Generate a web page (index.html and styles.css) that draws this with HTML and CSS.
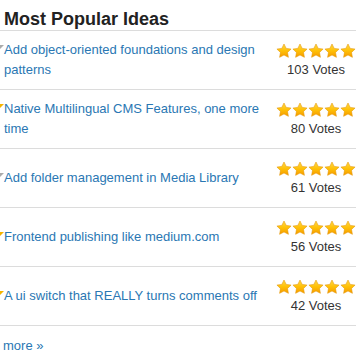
FILE: index.html
```html
<!DOCTYPE html>
<html lang="en">
<head>
  <meta charset="UTF-8" />
  <meta name="viewport" content="width=device-width, initial-scale=1.0" />
  <title>Most Popular Ideas</title>
  <link rel="stylesheet" href="styles.css">
</head>
<body>
  <svg class="defs" width="0" height="0" aria-hidden="true">
    <defs>
      <linearGradient id="gold" x1="0" y1="0" x2="0" y2="1">
        <stop offset="0" stop-color="#ffd84a" />
        <stop offset="0.5" stop-color="#ffc107" />
        <stop offset="1" stop-color="#f59a00" />
      </linearGradient>
      <symbol id="star" viewBox="0 0 24 24">
        <polygon points="12,1.5 15.3,8.1 22.6,9.1 17.3,14.2 18.6,21.5 12,18 5.4,21.5 6.7,14.2 1.4,9.1 8.7,8.1" fill="url(#gold)" stroke="#e39400" stroke-width="0.8" stroke-linejoin="round" />
      </symbol>
    </defs>
  </svg>

  <div class="widget">
    <h2 class="title">Most Popular Ideas</h2>
    <ul class="ideas">
      <li class="idea">
        <div class="idea-text"><span class="status grey"></span><a href="#">Add object-oriented foundations and design patterns</a></div>
        <div class="rating">
          <svg class="stars" width="80" height="16"><use href="#star" x="0" width="16" height="16"/><use href="#star" x="16" width="16" height="16"/><use href="#star" x="32" width="16" height="16"/><use href="#star" x="48" width="16" height="16"/><use href="#star" x="64" width="16" height="16"/></svg>
          <div class="votes">103 Votes</div>
        </div>
      </li>
      <li class="idea">
        <div class="idea-text"><span class="status gold"></span><a href="#">Native Multilingual CMS Features, one more time</a></div>
        <div class="rating">
          <svg class="stars" width="80" height="16"><use href="#star" x="0" width="16" height="16"/><use href="#star" x="16" width="16" height="16"/><use href="#star" x="32" width="16" height="16"/><use href="#star" x="48" width="16" height="16"/><use href="#star" x="64" width="16" height="16"/></svg>
          <div class="votes">80 Votes</div>
        </div>
      </li>
      <li class="idea">
        <div class="idea-text"><span class="status grey"></span><a href="#">Add folder management in Media Library</a></div>
        <div class="rating">
          <svg class="stars" width="80" height="16"><use href="#star" x="0" width="16" height="16"/><use href="#star" x="16" width="16" height="16"/><use href="#star" x="32" width="16" height="16"/><use href="#star" x="48" width="16" height="16"/><use href="#star" x="64" width="16" height="16"/></svg>
          <div class="votes">61 Votes</div>
        </div>
      </li>
      <li class="idea">
        <div class="idea-text"><span class="status gold"></span><a href="#">Frontend publishing like medium.com</a></div>
        <div class="rating">
          <svg class="stars" width="80" height="16"><use href="#star" x="0" width="16" height="16"/><use href="#star" x="16" width="16" height="16"/><use href="#star" x="32" width="16" height="16"/><use href="#star" x="48" width="16" height="16"/><use href="#star" x="64" width="16" height="16"/></svg>
          <div class="votes">56 Votes</div>
        </div>
      </li>
      <li class="idea">
        <div class="idea-text"><span class="status gold"></span><a href="#">A ui switch that REALLY turns comments off</a></div>
        <div class="rating">
          <svg class="stars" width="80" height="16"><use href="#star" x="0" width="16" height="16"/><use href="#star" x="16" width="16" height="16"/><use href="#star" x="32" width="16" height="16"/><use href="#star" x="48" width="16" height="16"/><use href="#star" x="64" width="16" height="16"/></svg>
          <div class="votes">42 Votes</div>
        </div>
      </li>
    </ul>
    <a class="more" href="#">more &raquo;</a>
  </div>
</body>
</html>
```

FILE: styles.css
```css
body {
  margin: 0;
  padding: 0;
  background: #ffffff;
  font-family: "Liberation Sans", Arial, sans-serif;
  color: #333;
}
.defs {
  display: block;
  width: 0;
  height: 0;
}
.widget {
  width: 356px;
}
.title {
  margin: 8px 0 0;
  padding: 0 4px;
  height: 22px;
  line-height: 22px;
  font-size: 18px;
  font-weight: bold;
  color: #222;
  border-bottom: 1px solid #dcdcdc;
}
.ideas {
  list-style: none;
  margin: 0;
  padding: 0;
}
.idea {
  display: flex;
  align-items: center;
  min-height: 58px;
  border-bottom: 1px solid #dcdcdc;
  padding-left: 4px;
}
.idea-text {
  flex: 1;
  font-size: 13px;
  line-height: 20px;
  padding-right: 6px;
}
.idea-text a {
  color: #2a77b3;
  text-decoration: none;
}
.status {
  display: inline-block;
  width: 0;
  height: 0;
  margin-left: -4px;
  vertical-align: 5px;
  border-top: 4px solid #aaa;
  border-right: 4px solid transparent;
}
.status.gold {
  border-top-color: #f5b400;
}
.rating {
  width: 80px;
  display: flex;
  flex-direction: column;
  align-items: center;
  gap: 3px;
}
.stars {
  display: block;
}
.votes {
  font-size: 13px;
  line-height: 16px;
  color: #333;
}
.more {
  display: inline-block;
  margin: 12px 0 0 3px;
  font-size: 13px;
  line-height: 16px;
  color: #2a77b3;
  text-decoration: none;
}
```
